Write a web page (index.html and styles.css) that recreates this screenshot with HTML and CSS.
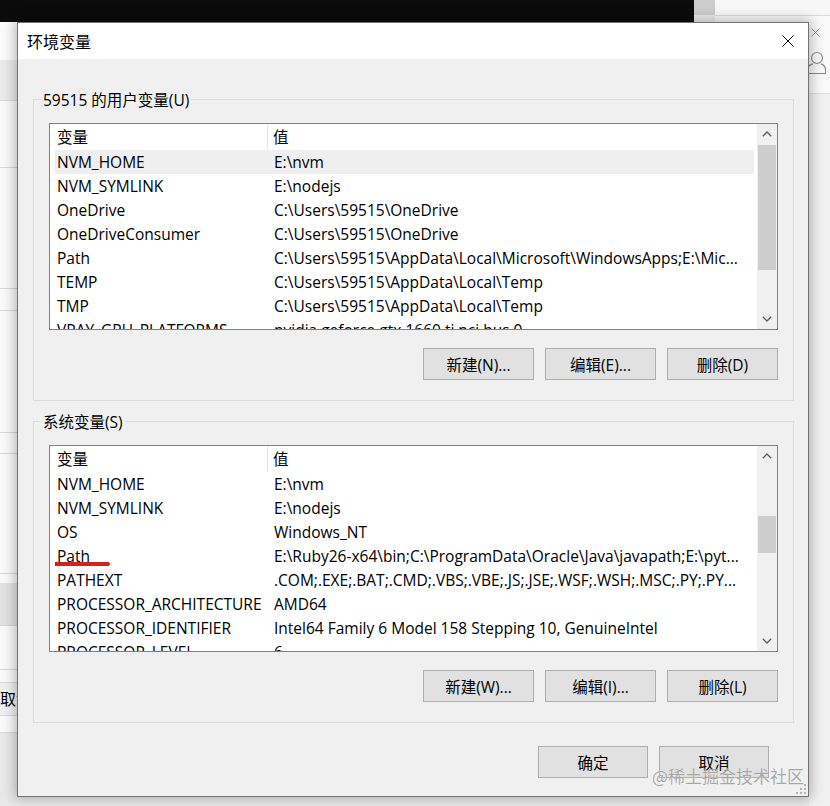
FILE: index.html
```html
<!DOCTYPE html>
<html lang="zh-CN">
<head>
<meta charset="utf-8">
<title>环境变量</title>
<link rel="stylesheet" href="styles.css">
</head>
<body>
<div class="desktop">
  <div class="topstrip">
    <div class="terminal"></div>
    <div class="vscroll"></div>
    <div class="topright"></div>
  </div>
  <div class="under">
    <div class="leftpane">
      <div class="lp s1"></div>
      <div class="lp s2"></div>
      <div class="lp s3 ln"></div>
      <div class="lp s4 ln"></div>
      <div class="lp s5 ln"></div>
      <div class="lp s6 ln"></div>
      <div class="lp s7 ln"></div>
      <div class="lp s8 ln"></div>
      <div class="lp s9 ln"></div>
      <div class="lp s10"></div>
      <div class="lp s11 ln"></div>
      <div class="lp s12 ln"></div>
      <div class="lp s13 ln">取消</div>
      <div class="lp s14 ln"></div>
      <div class="lp s15 ln"></div>
    </div>
    <div class="midpane"></div>
    <div class="rightpane">
      <div class="rp-top">
        <svg class="rp-close" width="9" height="9" viewBox="0 0 9 9"><path d="M0.5 0.5L8.5 8.5M8.5 0.5L0.5 8.5" stroke="#9a9a9a" stroke-width="1" fill="none"/></svg>
        <svg class="rp-user" width="20" height="23" viewBox="0 0 20 23"><circle cx="11" cy="7" r="5.5" stroke="#8a8a8a" stroke-width="1.2" fill="none"/><path d="M1 22.5V20c0-4 3-6.5 6-7.2M15 12.8c3 .7 4.6 3 4.6 7.2v2.5H1" stroke="#8a8a8a" stroke-width="1.2" fill="none"/></svg>
      </div>
      <div class="rp-rest"></div>
    </div>
  </div>
</div>

<div class="dialog">
  <div class="titlebar">
    <span class="title">环境变量</span>
    <svg class="close" width="12" height="12" viewBox="0 0 12 12"><path d="M0.5 0.5L11.5 11.5M11.5 0.5L0.5 11.5" stroke="#000" stroke-width="1" fill="none"/></svg>
  </div>
  <div class="dbody">
    <div class="group group-user">
      <div class="legend">59515 的用户变量(U)</div>
      <div class="list">
        <div class="list-body">
          <div class="head"><div class="h1">变量</div><div class="h2">值</div></div>
          <div class="row sel"><div class="c1">NVM_HOME</div><div class="c2">E:\nvm</div></div>
          <div class="row"><div class="c1">NVM_SYMLINK</div><div class="c2">E:\nodejs</div></div>
          <div class="row"><div class="c1">OneDrive</div><div class="c2">C:\Users\59515\OneDrive</div></div>
          <div class="row"><div class="c1">OneDriveConsumer</div><div class="c2">C:\Users\59515\OneDrive</div></div>
          <div class="row"><div class="c1">Path</div><div class="c2">C:\Users\59515\AppData\Local\Microsoft\WindowsApps;E:\Mic...</div></div>
          <div class="row"><div class="c1">TEMP</div><div class="c2">C:\Users\59515\AppData\Local\Temp</div></div>
          <div class="row"><div class="c1">TMP</div><div class="c2">C:\Users\59515\AppData\Local\Temp</div></div>
          <div class="row"><div class="c1">VRAY_GPU_PLATFORMS</div><div class="c2">nvidia geforce gtx 1660 ti pci bus 0</div></div>
        </div>
        <div class="sbar">
          <div class="sbtn"><svg width="10" height="6" viewBox="0 0 10 6"><path d="M0.8 5.2L5 1L9.2 5.2" stroke="#606060" stroke-width="1.3" fill="none"/></svg></div>
          <div class="strack"><div class="thumb thumb-user"></div></div>
          <div class="sbtn"><svg width="10" height="6" viewBox="0 0 10 6"><path d="M0.8 0.8L5 5L9.2 0.8" stroke="#606060" stroke-width="1.3" fill="none"/></svg></div>
        </div>
      </div>
      <div class="btnrow">
        <button class="btn">新建(N)...</button>
        <button class="btn">编辑(E)...</button>
        <button class="btn">删除(D)</button>
      </div>
    </div>

    <div class="group group-sys">
      <div class="legend">系统变量(S)</div>
      <div class="list">
        <div class="list-body">
          <div class="head"><div class="h1">变量</div><div class="h2">值</div></div>
          <div class="row"><div class="c1">NVM_HOME</div><div class="c2">E:\nvm</div></div>
          <div class="row"><div class="c1">NVM_SYMLINK</div><div class="c2">E:\nodejs</div></div>
          <div class="row"><div class="c1">OS</div><div class="c2">Windows_NT</div></div>
          <div class="row"><div class="c1"><span class="mark">Path</span></div><div class="c2">E:\Ruby26-x64\bin;C:\ProgramData\Oracle\Java\javapath;E:\pyt...</div></div>
          <div class="row"><div class="c1">PATHEXT</div><div class="c2">.COM;.EXE;.BAT;.CMD;.VBS;.VBE;.JS;.JSE;.WSF;.WSH;.MSC;.PY;.PY...</div></div>
          <div class="row"><div class="c1">PROCESSOR_ARCHITECTURE</div><div class="c2">AMD64</div></div>
          <div class="row"><div class="c1">PROCESSOR_IDENTIFIER</div><div class="c2">Intel64 Family 6 Model 158 Stepping 10, GenuineIntel</div></div>
          <div class="row"><div class="c1">PROCESSOR_LEVEL</div><div class="c2">6</div></div>
        </div>
        <div class="sbar">
          <div class="sbtn"><svg width="10" height="6" viewBox="0 0 10 6"><path d="M0.8 5.2L5 1L9.2 5.2" stroke="#606060" stroke-width="1.3" fill="none"/></svg></div>
          <div class="strack"><div class="thumb thumb-sys"></div></div>
          <div class="sbtn"><svg width="10" height="6" viewBox="0 0 10 6"><path d="M0.8 0.8L5 5L9.2 0.8" stroke="#606060" stroke-width="1.3" fill="none"/></svg></div>
        </div>
      </div>
      <div class="btnrow">
        <button class="btn">新建(W)...</button>
        <button class="btn">编辑(I)...</button>
        <button class="btn">删除(L)</button>
      </div>
    </div>

    <div class="footer">
      <button class="btn btn-f">确定</button>
      <button class="btn btn-f">取消</button>
    </div>
  </div>
  <svg class="grip" width="12" height="12" viewBox="0 0 12 12" fill="#b4b4b4"><rect x="9" y="1" width="2" height="2"/><rect x="5" y="5" width="2" height="2"/><rect x="9" y="5" width="2" height="2"/><rect x="1" y="9" width="2" height="2"/><rect x="5" y="9" width="2" height="2"/><rect x="9" y="9" width="2" height="2"/></svg>
</div>

<div class="watermark">@稀土掘金技术社区</div>
</body>
</html>
```

FILE: styles.css
```css
* { box-sizing: border-box; }
html, body { margin: 0; padding: 0; }
body {
  width: 830px;
  height: 806px;
  overflow: hidden;
  position: relative;
  background: #f2f2f2;
  font-family: "Open Sans", "Noto Sans CJK SC", sans-serif;
  font-size: 15.5px;
  color: #000;
}

/* background desktop */
.desktop { display: flex; flex-direction: column; height: 806px; }
.topstrip { display: flex; height: 22px; flex: none; }
.terminal { width: 694px; background: #0b0b0b; }
.vscroll { width: 21px; background: linear-gradient(#cdcdcd 0 15px, #ececec 15px); }
.topright { flex: 1; background: linear-gradient(#f7f7f7 0 15px, #dcdcdc 15px 16px, #f9f9f9 16px); }
.under { display: flex; flex: 1; }
.leftpane { width: 17px; display: flex; flex-direction: column; overflow: hidden; }
.lp { flex: none; background: #fafafa; }
.ln { border-top: 1px solid #d8d8d8; }
.s1 { height: 38px; background: #fbfbfb; }
.s2 { height: 40px; background: #ebebeb; }
.s3 { height: 67px; }
.s4 { height: 121px; }
.s5 { height: 22px; }
.s6 { height: 122px; }
.s7 { height: 21px; }
.s8 { height: 120px; }
.s9 { height: 10px; }
.s10 { height: 42px; background: #e2e2e2; }
.s11 { height: 44px; }
.s12 { height: 13px; }
.s13 { height: 33px; background: #f0f0f0; font-size: 16px; line-height: 32px; white-space: nowrap; }
.s14 { height: 17px; }
.s15 { flex: 1; background: #e9e9e9; }
.midpane { flex: 1; background: #ebebeb; }
.rightpane { width: 21px; display: flex; flex-direction: column; }
.rp-top { height: 71px; background: #f9f9f9; display: flex; flex-direction: column; padding-top: 6px; }
.rp-close { margin-left: 2px; }
.rp-user { margin: 14px 0 0 -3px; }
.rp-rest { flex: 1; background: #f1f1f1; border-top: 1px solid #dcdcdc; }

/* dialog window */
.dialog {
  position: absolute;
  left: 17px;
  top: 22px;
  width: 792px;
  height: 775px;
  border: 1px solid #737373;
  background: #f0f0f0;
  display: flex;
  flex-direction: column;
  box-shadow: 0 0 12px 2px rgba(0, 0, 0, 0.28);
}
.titlebar {
  height: 36px;
  flex: none;
  background: #fff;
  display: flex;
  align-items: center;
  justify-content: space-between;
  padding: 0 14px 0 9px;
}
.title { font-size: 16px; }
.close { display: block; }
.dbody { flex: 1; display: flex; flex-direction: column; }

.group {
  border: 1px solid #dcdcdc;
  margin: 0 14px 0 15px;
  padding: 0 15px 20px 15px;
}
.group-user { margin-top: 40px; }
.group-sys { margin-top: 20px; }
.legend {
  display: table;
  margin: -10px 0 0 -8px;
  padding: 0 2px;
  line-height: 20px;
  background: #f0f0f0;
}

.list {
  margin-top: 13px;
  height: 207px;
  border: 1px solid #828282;
  background: #fff;
  display: flex;
}
.list-body { flex: 1; min-width: 0; overflow: hidden; }
.head { display: flex; height: 26px; line-height: 26px; }
.h1 { width: 218px; padding-left: 7px; border-right: 1px solid #e5e5e5; }
.h2 { padding-left: 5px; }
.row {
  display: flex;
  height: 24px;
  line-height: 24px;
  margin: 0 3px 0 5px;
  white-space: nowrap;
}
.row.sel { background: #efefef; }
.c1 { width: 213px; flex: none; padding-left: 2px; overflow: hidden; }
.c2 { flex: 1; min-width: 0; padding-left: 6px; overflow: hidden; text-overflow: ellipsis; }
.mark { position: relative; }
.mark::after {
  content: "";
  position: absolute;
  left: -6px;
  top: 17px;
  width: 59px;
  height: 4px;
  border-radius: 2px;
  background: #d9201e;
}

.sbar { width: 20px; flex: none; display: flex; flex-direction: column; background: #f0f0f0; }
.sbtn { height: 20px; flex: none; display: flex; align-items: center; justify-content: center; }
.sbtn svg { display: block; }
.strack { flex: 1; }
.thumb { background: #cdcdcd; margin: 0 1px; }
.thumb-user { margin-top: 1px; height: 125px; }
.thumb-sys { margin-top: 50px; height: 37px; }

.btnrow {
  display: flex;
  justify-content: flex-end;
  gap: 11px;
  margin-top: 18px;
}
.btn {
  width: 111px;
  height: 32px;
  padding: 0;
  background: #e1e1e1;
  border: 1px solid #adadad;
  font-family: inherit;
  font-size: 15.5px;
  color: #000;
}
.footer {
  display: flex;
  justify-content: flex-end;
  gap: 11px;
  margin: 23px 39px 0 0;
}
.btn-f { width: 110px; }

.grip { position: absolute; right: 1px; bottom: 1px; }

.watermark {
  position: absolute;
  left: 652px;
  top: 765px;
  font-family: "Noto Sans CJK SC", sans-serif;
  font-size: 17px;
  line-height: 22px;
  color: rgba(135, 135, 135, 0.72);
  text-shadow: 0 0 1px rgba(255, 255, 255, 0.9);
  white-space: nowrap;
}
```
